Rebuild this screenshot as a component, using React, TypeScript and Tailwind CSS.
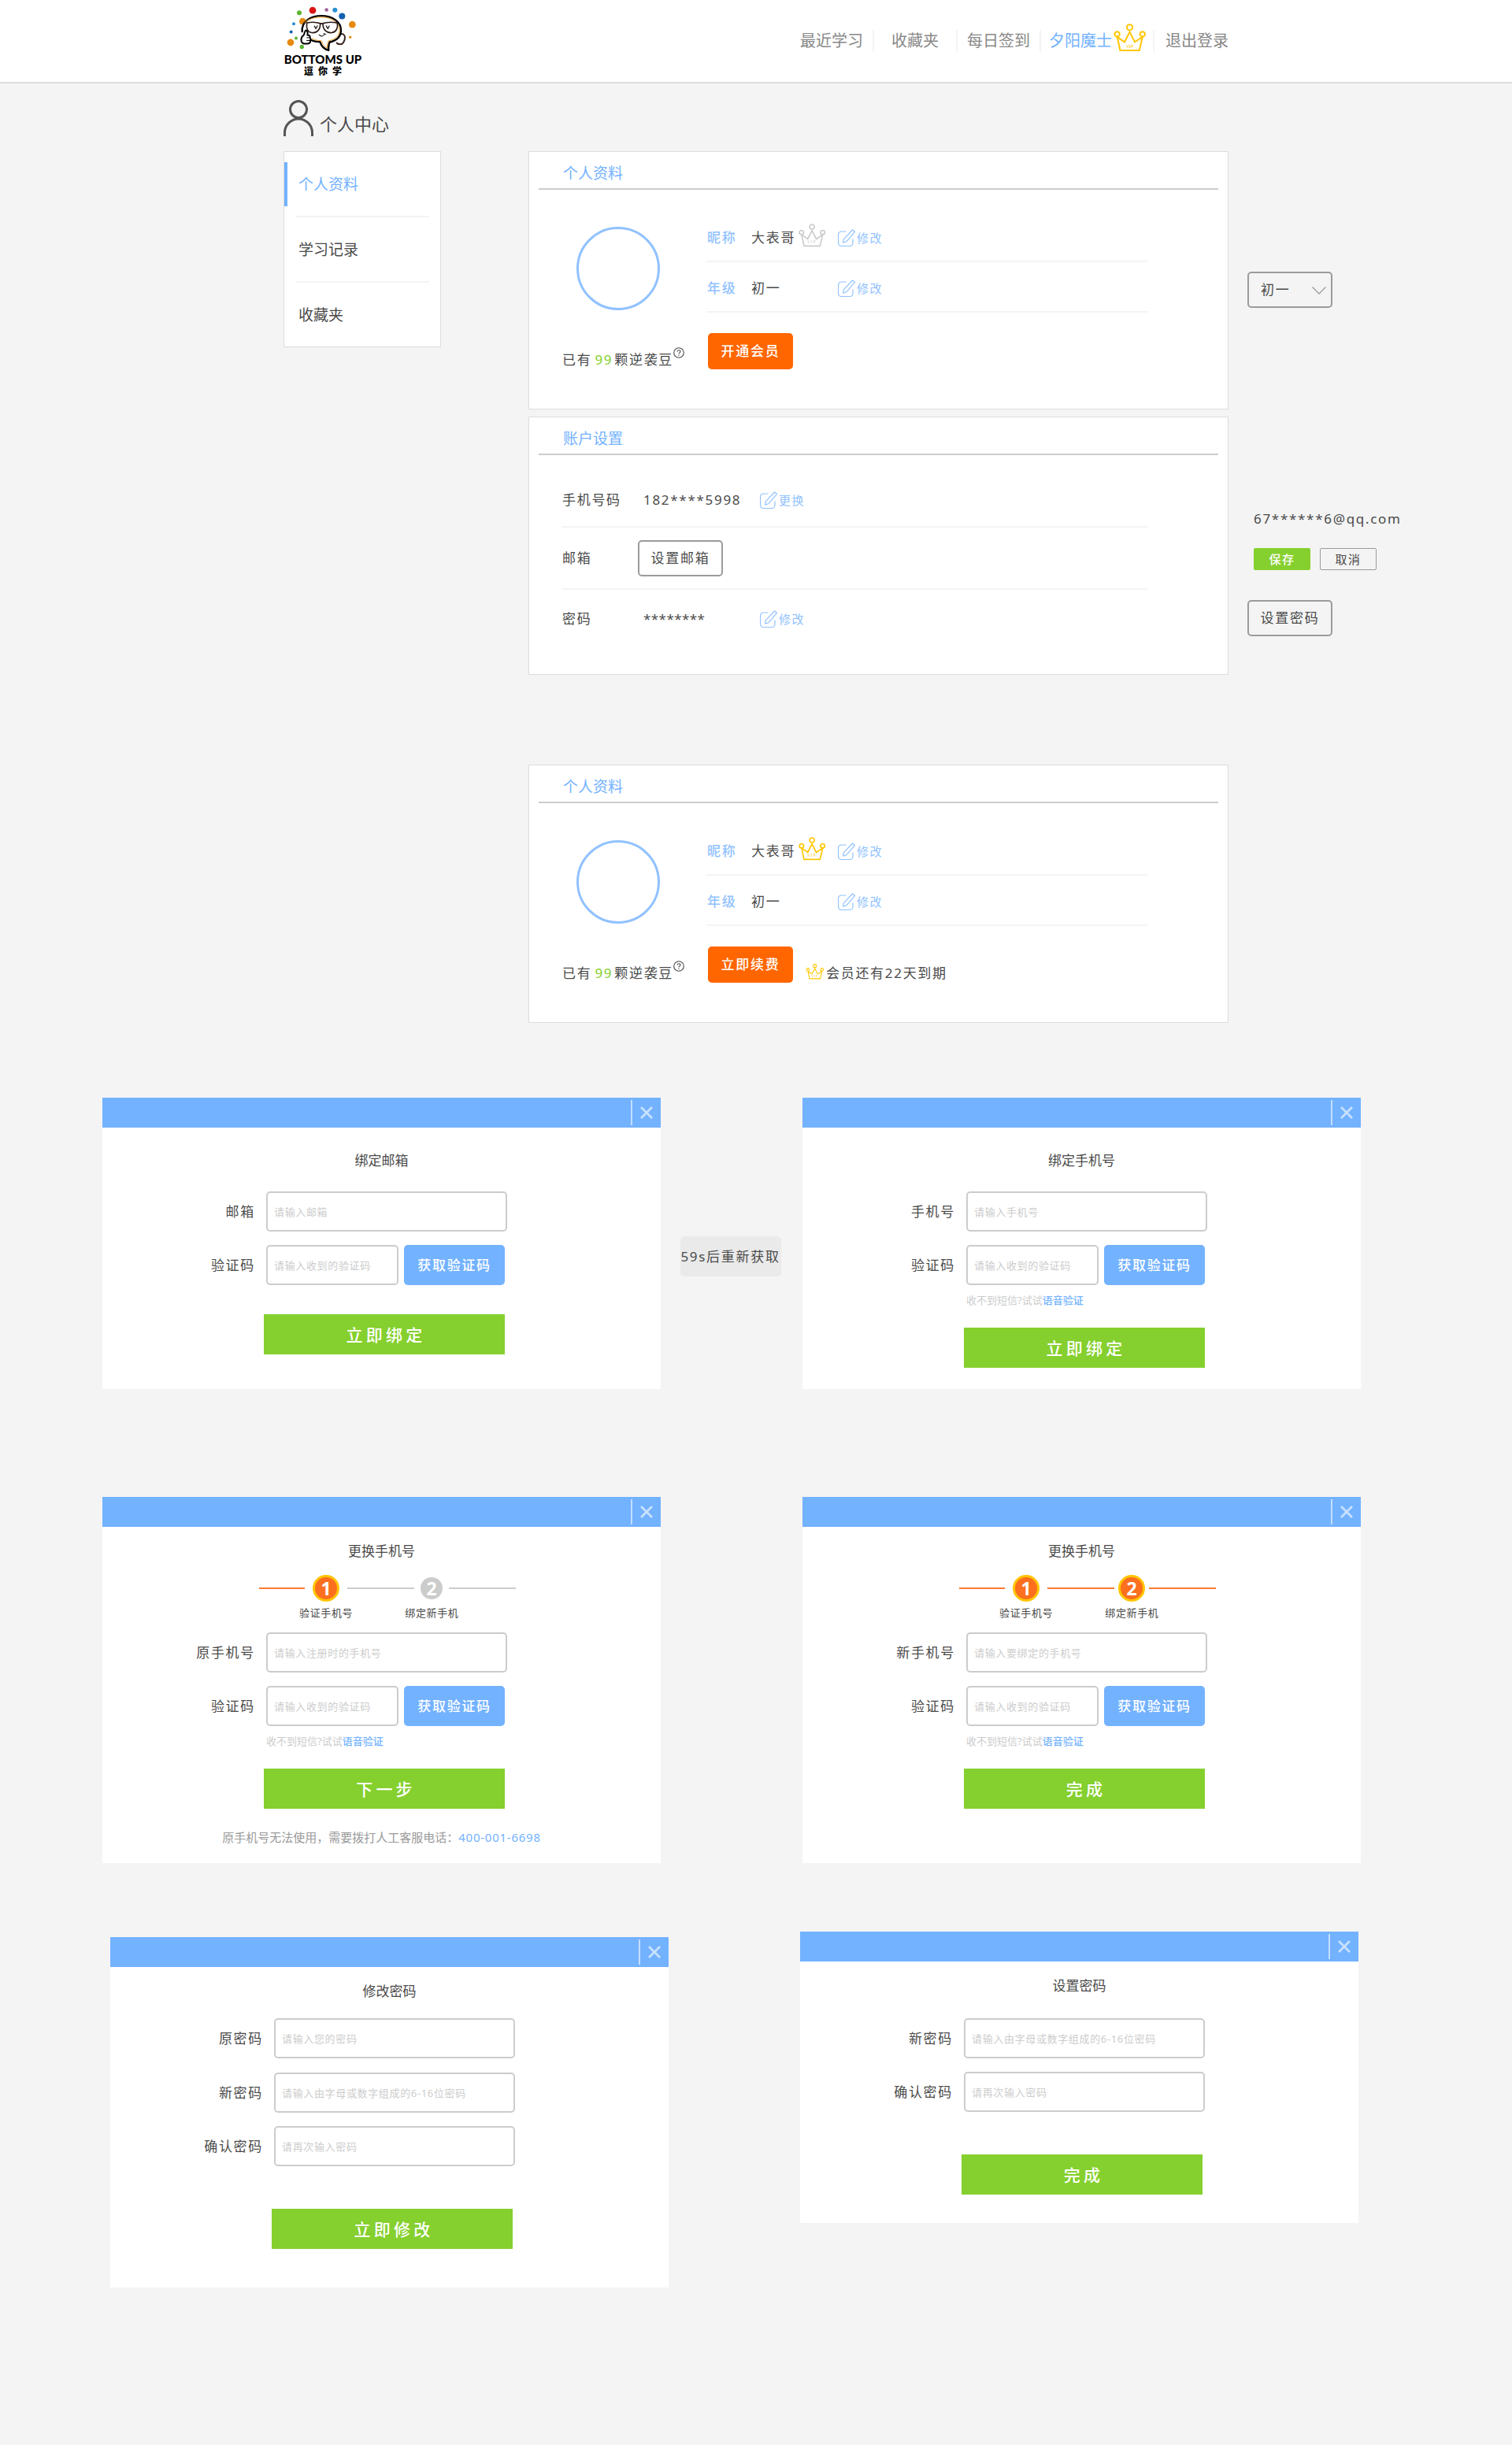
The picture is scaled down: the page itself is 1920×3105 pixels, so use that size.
import { useId, type ReactNode } from "react";

const FONT = "font-['Noto_Sans','Noto_Sans_CJK_SC',sans-serif]";

function Crown({ className }: { className: string }) {
  return (
    <svg viewBox="0 0 42 36" className={`shrink-0 ${className}`} fill="none" stroke="currentColor" strokeWidth="2" aria-label="VIP">
      <circle cx="20.5" cy="4.8" r="3.6" />
      <circle cx="4.6" cy="13.4" r="3.2" />
      <circle cx="36.8" cy="13.4" r="3.2" />
      <path d="M4.8 17 8.4 34H32.8L36.8 17 27 23.4 20.5 10.6 14 23.4Z" />
      <text x="20.8" y="30.5" textAnchor="middle" fontSize="6" fill="currentColor" stroke="none">
        VIP
      </text>
    </svg>
  );
}

function Logo() {
  return (
    <a href="#home" className="flex w-[100px] flex-col items-center pt-0.5 text-black" aria-label="BOTTOMS UP 逗你学">
      <svg viewBox="60 22 300 176" className="h-[59px] w-[100px]" fill="none" strokeLinecap="round" strokeLinejoin="round">
        <circle cx="120" cy="46" r="9" fill="#5cb531" />
        <circle cx="171" cy="37" r="13" fill="#dc1414" />
        <circle cx="224" cy="35" r="7" fill="#a0629a" />
        <circle cx="256" cy="36" r="9" fill="#2a8fd3" />
        <circle cx="283" cy="59" r="12" fill="#1260b0" />
        <circle cx="322" cy="91" r="13" fill="#e68a12" />
        <circle cx="99" cy="88" r="6" fill="#2a8fd3" />
        <circle cx="133" cy="79" r="13" fill="#e68a12" />
        <circle cx="89" cy="119" r="6" fill="#1260b0" />
        <circle cx="108" cy="143" r="6" fill="#5cb531" />
        <circle cx="87" cy="159" r="13" fill="#e68a12" />
        <circle cx="130" cy="176" r="8" fill="#5cb531" />
        <circle cx="314" cy="139" r="5" fill="#e68a12" />
        <path d="M276 128c10-4 18 2 18 12s-6 26-16 26c-7 0-13-1-15-5" fill="#fff" stroke="#3a2620" strokeWidth="6" />
        <path d="M131 118C128 80 163 58 204 58c44 0 75 24 75 54 0 26-18 40-43 46-4 8-5 20-4 31-15-3-27-13-33-32-16 0-30-4-40-10" fill="#fff" stroke="#000" strokeWidth="7" />
        <path d="M140 84c14-14 38-21 64-21 40 0 69 21 69 49 0 24-17 36-41 41-5 8-6 17-6 27-8-4-17-12-21-27-14-1-26-3-36-9" stroke="#f0a028" strokeWidth="3" />
        <path d="M148 85c18-4 38-3 54 2h6c16-5 38-6 58-2M149 86c-3 20 2 34 19 36 20 2 32-12 32-34M210 88c0 22 14 36 34 34 17-2 24-18 21-36" stroke="#2d1c18" strokeWidth="5" />
        <path d="M178 97l5 10 6-11M223 96l6 11 5-10" stroke="#222" strokeWidth="4" />
        <path d="M196 130c6 7 18 7 21-3M213 125l8 3" stroke="#222" strokeWidth="3.5" />
        <path d="M145 113c-6 4-4 14-9 20-8 4-9 14-8 21 2 8 12 11 22 10 9 0 13-4 12-11 2-5 1-10-1-13 1-7-4-9-10-9 3-8 0-17-6-18Z" fill="#fff" stroke="#000" strokeWidth="6" />
        <path d="M149 141h11M149 152h12" stroke="#000" strokeWidth="3" />
      </svg>
      <span className="font-[Lato] text-[15px] font-black leading-4 whitespace-nowrap">BOTTOMS UP</span>
      <span className="flex gap-1.5 text-xs font-black leading-4">
        <span>逗</span>
        <span>你</span>
        <span>学</span>
      </span>
    </a>
  );
}

function SiteHeader() {
  const item = "flex h-7 items-center border-r-2 border-[#f4f4f4]";
  return (
    <header className="border-b-2 border-[#dcdcdc] bg-white">
      <div className="mx-auto flex h-[104px] max-w-[1200px] items-center justify-between">
        <Logo />
        <nav className="flex items-center text-xl leading-7 text-[#888]">
          <a href="#recent" className={`${item} pr-3`}>最近学习</a>
          <a href="#favorites" className={`${item} px-[22px]`}>收藏夹</a>
          <a href="#checkin" className={`${item} px-3`}>每日签到</a>
          <a href="#me" className={`${item} gap-0.5 pr-2 pl-2.5 text-[#73b2ff]`}>
            夕阳魔士
            <Crown className="mb-2 h-9 w-[42px] text-[#ffc600]" />
          </a>
          <a href="#logout" className="pl-3.5">退出登录</a>
        </nav>
      </div>
    </header>
  );
}

function Sidebar() {
  const links = ["个人资料", "学习记录", "收藏夹"];
  return (
    <nav className="w-[200px] shrink-0 self-start border border-[#dcdcdc] bg-white text-[19px] leading-7">
      {links.map((text, i) => (
        <div key={text}>
          {i > 0 && <div className="mx-3.5 h-0.5 bg-[#f3f3f3]" />}
          <a
            href={`#section-${i}`}
            className={`flex h-[81px] items-center ${i === 0 ? "text-[#73b2ff]" : ""}`}
          >
            <span className={`flex h-14 items-center border-l-4 pl-3.5 ${i === 0 ? "border-[#73b2ff]" : "border-transparent"}`}>
              {text}
            </span>
          </a>
        </div>
      ))}
    </nav>
  );
}

function Card({ title, className = "", children }: { title: string; className?: string; children: ReactNode }) {
  return (
    <section className={`border border-[#dcdcdc] bg-white ${className}`}>
      <h2 className="mx-3 flex h-12 items-center border-b-2 border-[#ccc] pt-2 pl-[31px] text-[19px] leading-7 text-[#73b2ff]">
        {title}
      </h2>
      {children}
    </section>
  );
}

function EditButton({ children }: { children: string }) {
  return (
    <button type="button" className="flex items-center gap-0.5 text-[15px] leading-6 tracking-widest text-[#91c2ff]">
      <svg viewBox="0 0 22 22" className="h-[22px] w-[22px]" fill="none" stroke="currentColor" strokeWidth="1.2" strokeLinejoin="round">
        <path d="M10.5 3H4.5a4 4 0 0 0-4 4v10.500a4 4 0 0 0 4 4H15a4 4 0 0 0 4-4v-5" />
        <path d="m18.500 1 3 2.300L10.800 15.800l-4.100 1.300.6-4.200Z" />
      </svg>
      {children}
    </button>
  );
}

const outlineButton = "h-[46px] w-[108px] rounded-[5px] border-2 border-[#9b9b9b] leading-6 tracking-widest";

function ProfileCard({ vip, className }: { vip?: boolean; className?: string }) {
  return (
    <Card title="个人资料" className={className}>
      <div className="flex pr-[102px] pb-[50px] pl-[42px] tracking-widest">
        <div className="w-[183px] shrink-0 pt-[47px]">
          <div className="ml-[18px] h-[106px] w-[106px] rounded-full border-3 border-[#91c2ff] bg-white" />
          <p className="mt-[51px] flex whitespace-nowrap">
            已有<span className="mr-0.5 ml-1 text-[#85d02e]">99</span>颗逆袭豆
            <button type="button" aria-label="逆袭豆说明" className="-mt-1 h-3.5 w-3.5">
              <svg viewBox="0 0 14 14" className="h-3.5 w-3.5" fill="none" stroke="currentColor" strokeWidth="1.1">
                <circle cx="7" cy="7" r="6.300" />
                <path d="M5.100 5.600C5.100 3.200 9 3.200 9 5.500 9 6.900 7 7 7 8.600M7 9.800V11" />
              </svg>
            </button>
          </p>
        </div>
        <div className="min-w-0 flex-1">
          <div className="flex h-[92px] items-center border-b-2 border-[#f4f4f4] pt-8 pl-px">
            <span className="w-14 text-[#91c2ff] font-medium">昵称</span>
            <span className="flex w-[110px] items-center gap-1">
              大表哥
              <Crown className={`mb-1.5 h-[30px] w-[35px] ${vip ? "text-[#ffc600]" : "text-[#ccc]"}`} />
            </span>
            <EditButton>修改</EditButton>
          </div>
          <div className="flex h-16 items-center border-b-2 border-[#f4f4f4] pt-1 pl-px">
            <span className="w-14 text-[#91c2ff] font-medium">年级</span>
            <span className="w-[110px]">初一</span>
            <EditButton>修改</EditButton>
          </div>
          <div className="mt-[26px] ml-0.5 flex items-end gap-4">
            <button type="button" className="h-[46px] w-[108px] rounded-[5px] bg-[#ff6600] font-medium tracking-widest text-white">
              {vip ? "立即续费" : "开通会员"}
            </button>
            {vip && (
              <p className="flex gap-0.5">
                <Crown className="h-5 w-6 text-[#ffc600]" />
                会员还有22天到期
              </p>
            )}
          </div>
        </div>
      </div>
    </Card>
  );
}

function AccountCard() {
  return (
    <Card title="账户设置" className="mt-[9px]">
      <div className="pr-[102px] pb-[33px] pl-[42px] tracking-widest">
        <div className="flex h-[92px] items-center border-b-2 border-[#f4f4f4] pt-6">
          <span className="w-24">手机号码</span>
          <span className="w-[155px] pl-[7px]">182****5998</span>
          <EditButton>更换</EditButton>
        </div>
        <div className="flex h-[79px] items-center border-b-2 border-[#f4f4f4]">
          <span className="w-24">邮箱</span>
          <button type="button" className={outlineButton}>设置邮箱</button>
        </div>
        <div className="flex h-[74px] items-center">
          <span className="w-24">密码</span>
          <span className="w-[155px] pl-[7px] tracking-wide">********</span>
          <EditButton>修改</EditButton>
        </div>
      </div>
    </Card>
  );
}

function Variants() {
  return (
    <aside className="pt-[153px] pl-6 tracking-widest">
      <div className="relative w-[108px]">
        <select aria-label="年级" className={`${outlineButton} appearance-none bg-transparent pl-[15px]`}>
          <option>初一</option>
          <option>初二</option>
          <option>初三</option>
        </select>
        <svg viewBox="0 0 18 10" className="pointer-events-none absolute top-[19px] right-2 h-2.5 w-[18px]" fill="none" stroke="#9b9b9b" strokeWidth="1.300">
          <path d="m.5.5 8.500 8.500 8.500-8.500" />
        </svg>
      </div>
      <p className="mt-64 ml-2">67******6@qq.com</p>
      <div className="mt-[25px] ml-2 flex gap-3 text-[15px]">
        <button type="button" className="h-7 w-[72px] rounded-xs bg-[#85d02e] font-medium tracking-widest text-white">保存</button>
        <button type="button" className="h-7 w-[72px] rounded-xs border border-[#9b9b9b] tracking-widest">取消</button>
      </div>
      <button type="button" className={`${outlineButton} mt-[38px]`}>设置密码</button>
    </aside>
  );
}

function Dialog({ title, className = "", titleClass = "mt-[19px]", children }: { title: string; className?: string; titleClass?: string; children: ReactNode }) {
  return (
    <section role="dialog" aria-label={title} className={`bg-white ${className}`}>
      <div className="flex h-[38px] items-center justify-end bg-[#73b2ff]">
        <button type="button" aria-label="关闭" className="flex h-8 w-[38px] items-center justify-center border-l-2 border-[#c4deff]">
          <svg viewBox="0 0 16 16" className="h-4 w-4" fill="none" stroke="#c9e1ff" strokeWidth="2.800">
            <path d="m1 1 14 14M15 1 1 15" />
          </svg>
        </button>
      </div>
      <h2 className={`text-center ${titleClass}`}>{title}</h2>
      {children}
    </section>
  );
}

const inputBase =
  "h-[51px] rounded-[5px] border-2 border-[#ccc] bg-white px-2 text-[13px] tracking-wider outline-none placeholder:text-[#ccc]";

function Field({ label, placeholder, type = "text", code, className = "mt-[17px]" }: { label: string; placeholder: string; type?: string; code?: boolean; className?: string }) {
  const id = useId();
  return (
    <div className={`grid grid-cols-[208fr_306px_195fr] items-center ${className}`}>
      <label htmlFor={id} className="pr-3.5 text-right tracking-widest">{label}</label>
      {code ? (
        <div className="flex gap-[7px]">
          <input id={id} type={type} placeholder={placeholder} className={`${inputBase} w-[168px]`} />
          <button type="button" className="h-[51px] w-32 rounded-[5px] bg-[#73b2ff] font-medium tracking-widest text-white">获取验证码</button>
        </div>
      ) : (
        <input id={id} type={type} placeholder={placeholder} className={`${inputBase} w-full`} />
      )}
    </div>
  );
}

function VoiceHint() {
  return (
    <p className="mt-[9px] grid grid-cols-[208fr_306px_195fr] text-[13px] leading-5 text-[#ccc]">
      <span className="col-start-2">
        收不到短信?试试<a href="#voice" className="font-medium text-[#73b2ff]">语音验证</a>
      </span>
    </p>
  );
}

function Submit({ children, className }: { children: string; className: string }) {
  return (
    <div className={`grid grid-cols-[205fr_306px_198fr] ${className}`}>
      <button type="submit" className="col-start-2 h-[51px] bg-[#85d02e] pl-1 text-[21px] font-medium tracking-[0.2em] text-white">
        {children}
      </button>
    </div>
  );
}

function StepDot({ n, active }: { n: number; active: boolean }) {
  return (
    <span className="flex w-[34px] justify-center">
      <span
        className={`flex items-center justify-center rounded-full text-[23px] font-bold text-white ${
          active ? "h-[34px] w-[34px] border-3 border-[#ffc400] bg-[#fb6f1e]" : "h-7 w-7 bg-[#ccc]"
        }`}
      >
        {n}
      </span>
    </span>
  );
}

function Steps({ current }: { current: 1 | 2 }) {
  const second = current === 2;
  const rest = second ? "bg-[#fb7a2e]" : "bg-[#ccc]";
  return (
    <div className="mt-[18px] grid grid-cols-[199fr_327px_183fr]">
      <div className="col-start-2">
        <div className="flex h-[34px] items-center">
          <span className="h-0.5 w-[58px] bg-[#fb7a2e]" />
          <span className="mx-2.5"><StepDot n={1} active /></span>
          <span className={`h-0.5 w-[85px] ${rest}`} />
          <span className="mx-[5px]"><StepDot n={2} active={second} /></span>
          <span className={`h-0.5 w-[85px] ${rest}`} />
        </div>
        <div className="mt-1 flex gap-[66px] pl-[51px] text-[13px] leading-5 tracking-wider">
          <span>验证手机号</span>
          <span>绑定新手机</span>
        </div>
      </div>
    </div>
  );
}

export default function App() {
  return (
    <div className={`${FONT} min-h-screen bg-[#f4f4f4] pb-[200px] text-[17px] leading-6 text-[#4a4a4a]`}>
      <SiteHeader />

      <main>
        <div className="grid grid-cols-[1fr_minmax(0,1200px)_1fr]">
          <div className="col-start-2">
            <h1 className="mt-[21px] mb-[19px] flex h-[46px] items-center gap-2 text-[22px] leading-8">
              <svg viewBox="0 0 38 46" className="h-[46px] w-[38px]" fill="none" stroke="#555" strokeWidth="3">
                <circle cx="19" cy="12" r="10.500" />
                <path d="M1.500 46V41.500a17.500 17.500 0 0 1 35 0V46" />
              </svg>
              <span className="pt-3.5">个人中心</span>
            </h1>
          </div>
          <div className="col-start-2 flex gap-[111px]">
            <Sidebar />
            <div className="min-w-0 flex-1">
              <ProfileCard />
              <AccountCard />
              <ProfileCard vip className="mt-[114px]" />
            </div>
          </div>
          <Variants />
        </div>

        <div className="mt-[95px] grid grid-cols-[709fr_180fr_709fr] pr-48 pl-[130px]">
          <Dialog title="绑定邮箱" titleClass="mt-[30px]">
            <form>
              <Field label="邮箱" placeholder="请输入邮箱" className="mt-[27px]" />
              <Field label="验证码" placeholder="请输入收到的验证码" code />
              <Submit className="mt-[37px]">立即绑定</Submit>
            </form>
          </Dialog>
          <div className="flex justify-center pt-44 pr-[3px]">
            <button type="button" disabled className="h-[51px] w-32 rounded-[5px] bg-[#eaeaea] whitespace-nowrap tracking-widest">
              59s后重新获取
            </button>
          </div>
          <Dialog title="绑定手机号" titleClass="mt-[30px]" className="pb-[27px]">
            <form>
              <Field label="手机号" placeholder="请输入手机号" type="tel" className="mt-[27px]" />
              <Field label="验证码" placeholder="请输入收到的验证码" code />
              <VoiceHint />
              <Submit className="mt-[25px]">立即绑定</Submit>
            </form>
          </Dialog>
        </div>

        <div className="mt-[137px] grid grid-cols-2 gap-[180px] pr-48 pl-[130px]">
          <Dialog title="更换手机号" className="pb-[21px]">
            <Steps current={1} />
            <form>
              <Field label="原手机号" placeholder="请输入注册时的手机号" type="tel" className="mt-[15px]" />
              <Field label="验证码" placeholder="请输入收到的验证码" code />
              <VoiceHint />
              <Submit className="mt-[25px]">下一步</Submit>
            </form>
            <p className="mt-6 text-center text-[15px] text-[#999]">
              原手机号无法使用，需要拨打人工客服电话：
              <a href="tel:400-001-6698" className="tracking-wider text-[#73b2ff]">400-001-6698</a>
            </p>
          </Dialog>
          <Dialog title="更换手机号">
            <Steps current={2} />
            <form>
              <Field label="新手机号" placeholder="请输入要绑定的手机号" type="tel" className="mt-[15px]" />
              <Field label="验证码" placeholder="请输入收到的验证码" code />
              <VoiceHint />
              <Submit className="mt-[25px]">完成</Submit>
            </form>
          </Dialog>
        </div>

        <div className="mt-[87px] grid grid-cols-2 items-start gap-[167px] pr-[195px] pl-[140px]">
          <Dialog title="修改密码" className="mt-[7px] pb-[49px]">
            <form>
              <Field label="原密码" placeholder="请输入您的密码" type="password" className="mt-[22px]" />
              <Field label="新密码" placeholder="请输入由字母或数字组成的6-16位密码" type="password" className="mt-[18px]" />
              <Field label="确认密码" placeholder="请再次输入密码" type="password" />
              <Submit className="mt-[54px]">立即修改</Submit>
            </form>
          </Dialog>
          <Dialog title="设置密码" className="pb-9">
            <form>
              <Field label="新密码" placeholder="请输入由字母或数字组成的6-16位密码" type="password" className="mt-[29px]" />
              <Field label="确认密码" placeholder="请再次输入密码" type="password" />
              <Submit className="mt-[54px]">完成</Submit>
            </form>
          </Dialog>
        </div>
      </main>
    </div>
  );
}
